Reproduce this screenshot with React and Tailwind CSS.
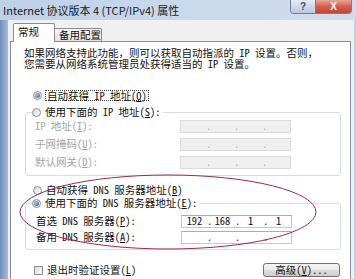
import React from "react";

function Radio({ checked }) {
  return (
    <span className="flex h-[9px] w-[9px] shrink-0 items-center justify-center rounded-full border border-[#8d9196] bg-gradient-to-br from-[#d2d5d9] to-[#fdfdfd]">
      {checked && (
        <span className="h-[5px] w-[5px] rounded-full bg-[radial-gradient(circle_at_35%_35%,#a9cbe9,#24507f)]" />
      )}
    </span>
  );
}

function U({ children }) {
  return <span className="underline underline-offset-1">{children}</span>;
}

function IpBox({ values, disabled }) {
  const segs = values || ["", "", "", ""];
  return (
    <div
      className={
        "flex h-[13px] w-[111px] items-center border " +
        (disabled
          ? "border-[#dadada] bg-[#efefef] text-[#a8a8a8]"
          : "border-[#c3c6cb] border-t-[#a9acb2] bg-white text-[#111]")
      }
    >
      {segs.map((v, i) => (
        <React.Fragment key={i}>
          <span className="flex-1 text-center">{v}</span>
          {i < 3 && <span className={"w-[3px] text-center " + (disabled ? "text-[#b0b0b0]" : "text-[#333]")}>.</span>}
        </React.Fragment>
      ))}
    </div>
  );
}

function Row({ label, disabled, values }) {
  return (
    <div className="flex h-[13px] items-center">
      <span className={"w-[154px] pl-[9px] " + (disabled ? "text-[#a3a3a3]" : "text-[#111]")}>{label}</span>
      <IpBox disabled={disabled} values={values} />
    </div>
  );
}

export default function App() {
  return (
    <div className="relative h-[279px] w-[356px] overflow-hidden bg-[#e9edf2] text-[10.5px] leading-[10.5px] text-[#111] font-['Noto_Sans_Mono_CJK_SC','Noto_Sans_CJK_SC',monospace]">
      {/* title bar */}
      <div className="flex h-[20px] items-start bg-gradient-to-r from-[#bcd0e8] via-[#c9d9ec] to-[#cfdcec]">
        <span className="mt-[4px] pl-[3px] text-[11px] leading-[12px] text-[#1a1a1a] font-['Noto_Sans_CJK_SC',sans-serif]">
          Internet 协议版本 4 (TCP/IPv4) 属性
        </span>
        <div className="ml-auto mr-[4px] flex h-[14px] overflow-hidden rounded-b-[4px] border border-t-0 border-[#6f7f96]">
          <div className="flex w-[25px] items-center justify-center border-r border-[#6f7f96] bg-gradient-to-b from-[#e3ebf5] to-[#b8c9de] text-[10px] font-bold leading-none text-[#3d4c63] font-['Liberation_Sans',sans-serif]">
            ?
          </div>
          <div className="flex w-[35px] items-center justify-center bg-gradient-to-b from-[#e7a497] via-[#d0604d] to-[#c4432f] text-[10px] font-bold leading-none text-white font-['Liberation_Sans',sans-serif]">
            X
          </div>
        </div>
      </div>

      {/* body */}
      <div className="flex h-[259px]">
        <div className="w-[8px] bg-gradient-to-r from-[#6f8fbd] to-[#a9bcd6]" />
        <div className="flex flex-1 flex-col bg-[#f0f0f0] pl-[2px] pr-[3px] pt-[3px]">
          {/* tabs */}
          <div className="flex h-[18px] items-end pl-[3px]">
            <div className="relative z-10 -mb-px flex h-[19px] w-[42px] items-start justify-start rounded-t-[2px] border border-b-0 border-[#898c95] bg-white pl-[4px] pt-[3px] text-[#111]">
              常规
            </div>
            <div className="flex h-[13px] w-[47px] items-start rounded-tr-[2px] border border-b-0 border-l-0 border-[#898c95] bg-gradient-to-b from-[#f7f7f7] to-[#e3e3e3] pl-[4px] pt-px">
              备用配置
            </div>
          </div>
          {/* panel */}
          <div className="flex-1 border border-b-0 border-[#898c95] bg-white pl-[13px] pr-[9px]">
            <p className="mt-[6px] w-[300px]">
              如果网络支持此功能，则可以获取自动指派的 IP 设置。否则，
              <br />
              您需要从网络系统管理员处获得适当的 IP 设置。
            </p>

            <div className="ml-[9px] mt-[21px] flex h-[11px] items-center gap-[3px]">
              <Radio checked />
              <span className="border border-dotted border-[#444] px-px leading-[9px]">
                自动获得 IP 地址(<U>O</U>)
              </span>
            </div>

            <div className="ml-px mt-[11px] h-[64px] rounded-[3px] border border-[#d5dfe5]">
              <div className="ml-[6px] -mt-[6px] flex h-[11px] w-fit items-center gap-[4px] bg-white pr-[2px]">
                <Radio />
                <span>使用下面的 IP 地址(<U>S</U>):</span>
              </div>
              <div className="mt-[2px] flex flex-col gap-[5px]">
                <Row disabled label={<>IP 地址(<U>I</U>):</>} />
                <Row disabled label={<>子网掩码(<U>U</U>):</>} />
                <Row disabled label={<>默认网关(<U>D</U>):</>} />
              </div>
            </div>

            <div className="ml-[9px] mt-[9px] flex h-[11px] items-center gap-[4px]">
              <Radio />
              <span>自动获得 DNS 服务器地址(<U>B</U>)</span>
            </div>

            <div className="ml-px mt-[7px] h-[47px] rounded-[3px] border border-[#d5dfe5]">
              <div className="ml-[6px] -mt-[6px] flex h-[11px] w-fit items-center gap-[4px] bg-white pr-[2px]">
                <Radio checked />
                <span>使用下面的 DNS 服务器地址(<U>E</U>):</span>
              </div>
              <div className="mt-[6px] flex flex-col gap-[3px]">
                <div className="ml-px">
                  <Row label={<>首选 DNS 服务器(<U>P</U>):</>} values={["192", "168", "1", "1"]} />
                </div>
                <div className="ml-px">
                  <Row label={<>备用 DNS 服务器(<U>A</U>):</>} />
                </div>
              </div>
            </div>

            <div className="mt-[13px] flex h-[14px] items-center">
              <span className="ml-[10px] h-[9px] w-[9px] border border-[#8f8f8f] bg-gradient-to-br from-[#d9dcdf] to-[#fafafa]" />
              <span className="ml-[4px]">退出时验证设置(<U>L</U>)</span>
              <div className="ml-auto mr-px flex h-[14px] w-[77px] items-center justify-center rounded-[3px] border border-[#707070] bg-[linear-gradient(#f4f4f4_0%,#ebebeb_50%,#dddddd_51%,#cfcfcf_100%)]">
                高级(<U>V</U>)...
              </div>
            </div>
          </div>
        </div>
        <div className="w-[2px] bg-[#c7d0da]" />
      </div>

      {/* red annotation ellipse */}
      <svg className="pointer-events-none absolute left-0 top-0" width="356" height="279" viewBox="0 0 356 279">
        <ellipse cx="168" cy="212" rx="148" ry="37" fill="none" stroke="#9c2b47" strokeWidth="1" />
      </svg>
    </div>
  );
}
